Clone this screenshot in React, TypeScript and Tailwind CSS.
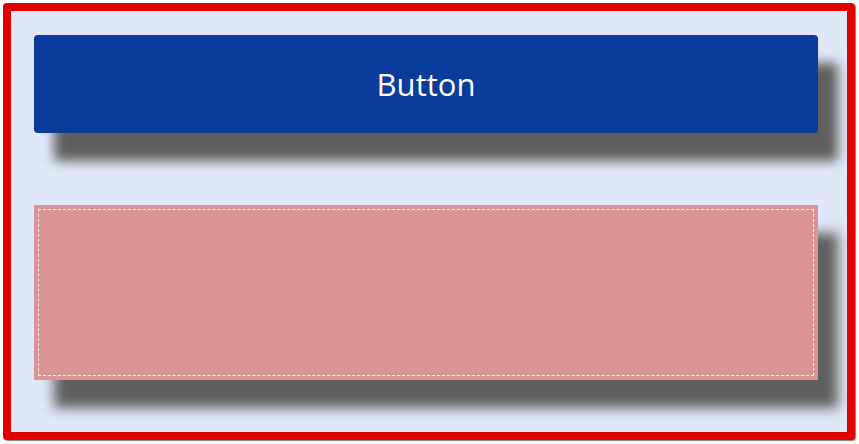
import React from 'react'

const App: React.FC = () => {
    return (
        <div className="w-[859px] h-[444px] bg-white p-[3px]" style={{ fontFamily: '"Open Sans", sans-serif' }}>
            <div className="w-[852px] h-[437px] border-[8px] border-[#e00000] rounded-[4px] bg-[#e1e7f8] pl-[23px] pt-[24px] shadow-[1px_1px_1px_rgba(0,0,0,0.5)]">
                {/* Button */}
                <button className="w-[784px] h-[98px] rounded-[4px] bg-[#0a3c9b] text-white text-[31px] flex items-center justify-center shadow-[20px_28px_12px_#5f5f5f]">
                    Button
                </button>

                {/* Panel */}
                <div className="mt-[72px] w-[784px] h-[175px] bg-[#d99594] p-[4px] shadow-[20px_28px_12px_#5f5f5f]">
                    <div className="w-full h-full border border-dashed border-[#f4f0f0]" />
                </div>
            </div>
        </div>
    )
}

export default App
